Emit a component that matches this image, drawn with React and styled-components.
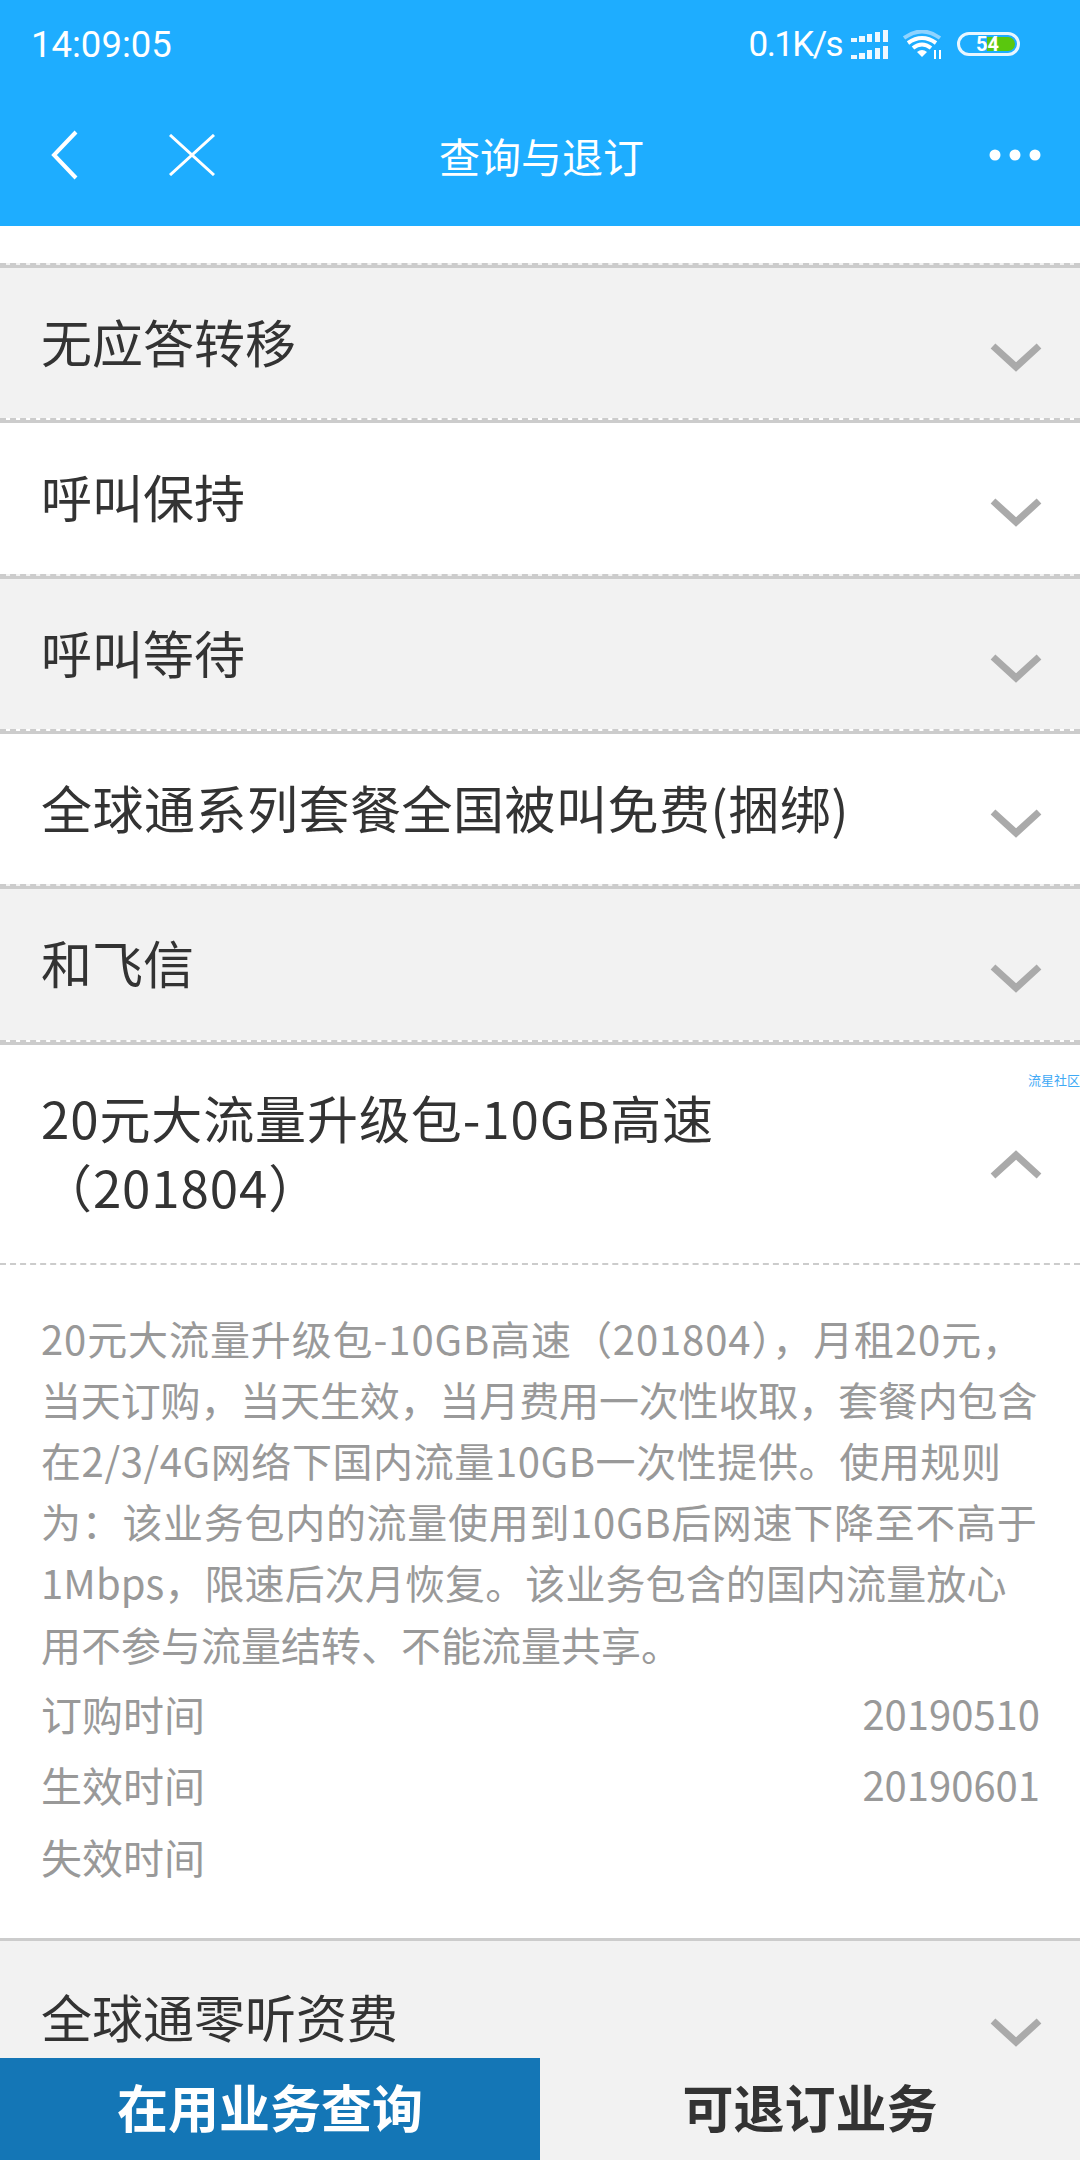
import React from 'react';
import styled, { createGlobalStyle } from 'styled-components';

const Global = createGlobalStyle`
  html, body { margin: 0; padding: 0; background: #fff; }
  * { box-sizing: border-box; }
`;

const CJK = `"Noto Sans CJK SC", "Noto Sans", sans-serif`;

const Page = styled.div`
  width: 1080px;
  height: 2160px;
  display: flex;
  flex-direction: column;
  overflow: hidden;
  font-family: ${CJK};
  color: #333;
`;

const Header = styled.header`
  height: 226px;
  flex: none;
  background: #1eadff;
  color: #fff;
  display: flex;
  flex-direction: column;
`;

const StatusBar = styled.div`
  height: 88px;
  padding: 0 60px 0 31px;
  display: flex;
  align-items: center;
  justify-content: space-between;
  font-family: Roboto, "Liberation Sans", sans-serif;
  font-size: 36.5px;
`;

const StatusRight = styled.div`
  display: flex;
  align-items: center;
  gap: 9px;
`;

const Speed = styled.span`
  font-size: 35px;
  letter-spacing: -1.6px;
`;

const Battery = styled.div`
  position: relative;
  width: 63px;
  height: 24px;
  margin-left: 5px;
  border: 3px solid #e8f6ff;
  border-radius: 12px;
  padding: 2px;
  display: flex;
  align-items: stretch;
`;

const BatteryFill = styled.div`
  margin-left: 25px;
  flex: 1;
  background: #5ac70e;
  border-radius: 0 8px 8px 0;
`;

const BatteryLevel = styled.span`
  position: absolute;
  left: 16px;
  top: -6px;
  font-size: 20px;
  font-weight: 700;
  line-height: 30px;
`;

const NavBar = styled.nav`
  flex: 1;
  padding: 0 39px 4px 50px;
  display: flex;
  align-items: center;
`;

const NavIcons = styled.div`
  width: 350px;
  display: flex;
  align-items: center;
  gap: 89px;
`;

const NavTitle = styled.div`
  flex: 1;
  margin-left: 39px;
  font-size: 41px;
  line-height: 50px;
`;

const List = styled.div`
  flex: 1;
  min-height: 0;
  overflow: hidden;
  padding-top: 37px;
`;

const Row = styled.div`
  height: 155.33px;
  background: ${(p) => (p.$grey ? '#f2f2f2' : '#fff')};
  border-top: ${(p) => (p.$solid ? '3px solid #ccc' : '2px dashed #ccc')};
  box-shadow: ${(p) => (p.$solid ? 'none' : 'inset 0 3px 0 #ccc')};
  padding: 3px 38px 0 41px;
  display: flex;
  align-items: center;
  justify-content: space-between;
  font-size: 51px;
  line-height: 69px;
`;

const RowTitle = styled.div`
  margin-top: -3px;
  width: 700px;
`;

const RowWide = styled(RowTitle)`
  width: 900px;
  white-space: nowrap;
  letter-spacing: 0.5px;
`;

const OpenTitle = styled(RowTitle)`
  margin-top: 0;
  letter-spacing: 0.9px;
`;

const Chevron = styled.svg`
  width: 52px;
  height: 32px;
  flex: none;
  margin-top: ${(p) => p.$top}px;
`;

const OpenHead = styled.div`
  position: relative;
  height: 225px;
  border-top: 2px dashed #ccc;
  box-shadow: inset 0 3px 0 #ccc;
  border-bottom: 2px dashed #ccc;
  padding: 0 38px 0 41px;
  display: flex;
  align-items: center;
  justify-content: space-between;
  font-size: 51px;
  line-height: 69px;
`;

const Watermark = styled.span`
  position: absolute;
  right: 0;
  top: 31px;
  font-size: 13px;
  line-height: 14px;
  color: #3fa9f5;
`;

const Details = styled.div`
  padding: 43px 40px 0 41px;
  height: 673px;
  color: #999;
  font-size: 40px;
`;

const Desc = styled.div`
  line-height: 61.2px;
  margin-bottom: 2px;
  white-space: nowrap;
`;

const DescLine = styled.div`
  letter-spacing: ${(p) => p.$spacing}px;
`;

const InfoRow = styled.div`
  height: 71.5px;
  display: flex;
  align-items: center;
  justify-content: space-between;
`;

const InfoLabel = styled.span`
  font-size: 41px;
`;

const Tabs = styled.div`
  flex: none;
  height: 102px;
  display: flex;
  font-size: 51px;
  font-weight: 700;
`;

const Tab = styled.div`
  width: 50%;
  padding-bottom: 6px;
  display: flex;
  align-items: center;
  justify-content: center;
  background: ${(p) => (p.$active ? '#1476b6' : '#f2f2f2')};
  color: ${(p) => (p.$active ? '#fff' : '#333')};
`;

const Down = () => (
  <Chevron viewBox="0 0 52 32" $top={28}>
    <path d="M3 5 L26 26 L49 5" fill="none" stroke="#aaa" strokeWidth="7" />
  </Chevron>
);

const Up = () => (
  <Chevron viewBox="0 0 52 32" $top={26}>
    <path d="M3 27 L26 6 L49 27" fill="none" stroke="#aaa" strokeWidth="7" />
  </Chevron>
);

const Signal = () => (
  <svg width="37" height="29" viewBox="0 0 37 29" fill="#eef8ff">
    <rect x="0" y="8" width="6" height="4" /><rect x="8" y="6" width="6" height="6" />
    <rect x="16" y="4" width="5" height="8" /><rect x="24" y="2" width="5" height="10" />
    <rect x="32" y="0" width="5" height="12" />
    <rect x="0" y="25" width="6" height="4" /><rect x="8" y="23" width="6" height="6" />
    <rect x="16" y="20" width="5" height="9" /><rect x="24" y="18" width="5" height="11" />
    <rect x="32" y="16" width="5" height="13" />
  </svg>
);

const Wifi = () => (
  <svg width="40" height="29" viewBox="0 0 40 29" fill="none" style={{ marginLeft: 6 }}>
    <path d="M1 8 Q19 -5 37 8" stroke="#8fd3ff" strokeWidth="4" />
    <path d="M5 13 Q19 3 33 13" stroke="#fff" strokeWidth="4" />
    <path d="M10 18 Q19 11 28 18" stroke="#fff" strokeWidth="4" />
    <path d="M14 22 L19 27 L24 22 Q19 18 14 22Z" fill="#fff" />
    <path d="M32 20 V29 M37 20 V29" stroke="#fff" strokeWidth="2" />
  </svg>
);

const rows = [
  { t: '无应答转移', grey: true },
  { t: '呼叫保持' },
  { t: '呼叫等待', grey: true },
  { t: '全球通系列套餐全国被叫免费(捆绑)', wide: true },
  { t: '和飞信', grey: true },
];

const descLines = [
  { t: '20元大流量升级包-10GB高速（201804），月租20元，', s: 0.9 },
  { t: '当天订购，当天生效，当月费用一次性收取，套餐内包含', s: -0.15 },
  { t: '在2/3/4G网络下国内流量10GB一次性提供。使用规则', s: 0.6 },
  { t: '为：该业务包内的流量使用到10GB后网速下降至不高于', s: 0.7 },
  { t: '1Mbps，限速后次月恢复。该业务包含的国内流量放心', s: 0.1 },
  { t: '用不参与流量结转、不能流量共享。', s: 0 },
];

export default function App() {
  return (
    <Page>
      <Global />
      <Header>
        <StatusBar>
          <span>14:09:05</span>
          <StatusRight>
            <Speed>0.1K/s</Speed>
            <Signal />
            <Wifi />
            <Battery>
              <BatteryFill />
              <BatteryLevel>54</BatteryLevel>
            </Battery>
          </StatusRight>
        </StatusBar>
        <NavBar>
          <NavIcons>
            <svg width="30" height="50" viewBox="0 0 30 50" fill="none">
              <path d="M26 2 L4 25 L26 48" stroke="#fff" strokeWidth="4" />
            </svg>
            <svg width="46" height="42" viewBox="0 0 46 42" fill="none">
              <path d="M1 1 L45 41 M45 1 L1 41" stroke="#fff" strokeWidth="3" />
            </svg>
          </NavIcons>
          <NavTitle>查询与退订</NavTitle>
          <svg width="52" height="12" viewBox="0 0 52 12" fill="#fff">
            <circle cx="6" cy="6" r="5.5" /><circle cx="26" cy="6" r="5.5" /><circle cx="46" cy="6" r="5.5" />
          </svg>
        </NavBar>
      </Header>
      <List>
        {rows.map((r) => (
          <Row key={r.t} $grey={r.grey}>
            {r.wide ? <RowWide>{r.t}</RowWide> : <RowTitle>{r.t}</RowTitle>}
            <Down />
          </Row>
        ))}
        <OpenHead>
          <OpenTitle>20元大流量升级包-10GB高速（201804）</OpenTitle>
          <Up />
          <Watermark>流星社区</Watermark>
        </OpenHead>
        <Details>
          <Desc>
            {descLines.map((l) => (
              <DescLine key={l.t} $spacing={l.s}>{l.t}</DescLine>
            ))}
          </Desc>
          <InfoRow><InfoLabel>订购时间</InfoLabel><span>20190510</span></InfoRow>
          <InfoRow><InfoLabel>生效时间</InfoLabel><span>20190601</span></InfoRow>
          <InfoRow><InfoLabel>失效时间</InfoLabel></InfoRow>
        </Details>
        <Row $grey $solid>
          <RowTitle>全球通零听资费</RowTitle>
          <Down />
        </Row>
      </List>
      <Tabs>
        <Tab $active>在用业务查询</Tab>
        <Tab>可退订业务</Tab>
      </Tabs>
    </Page>
  );
}
